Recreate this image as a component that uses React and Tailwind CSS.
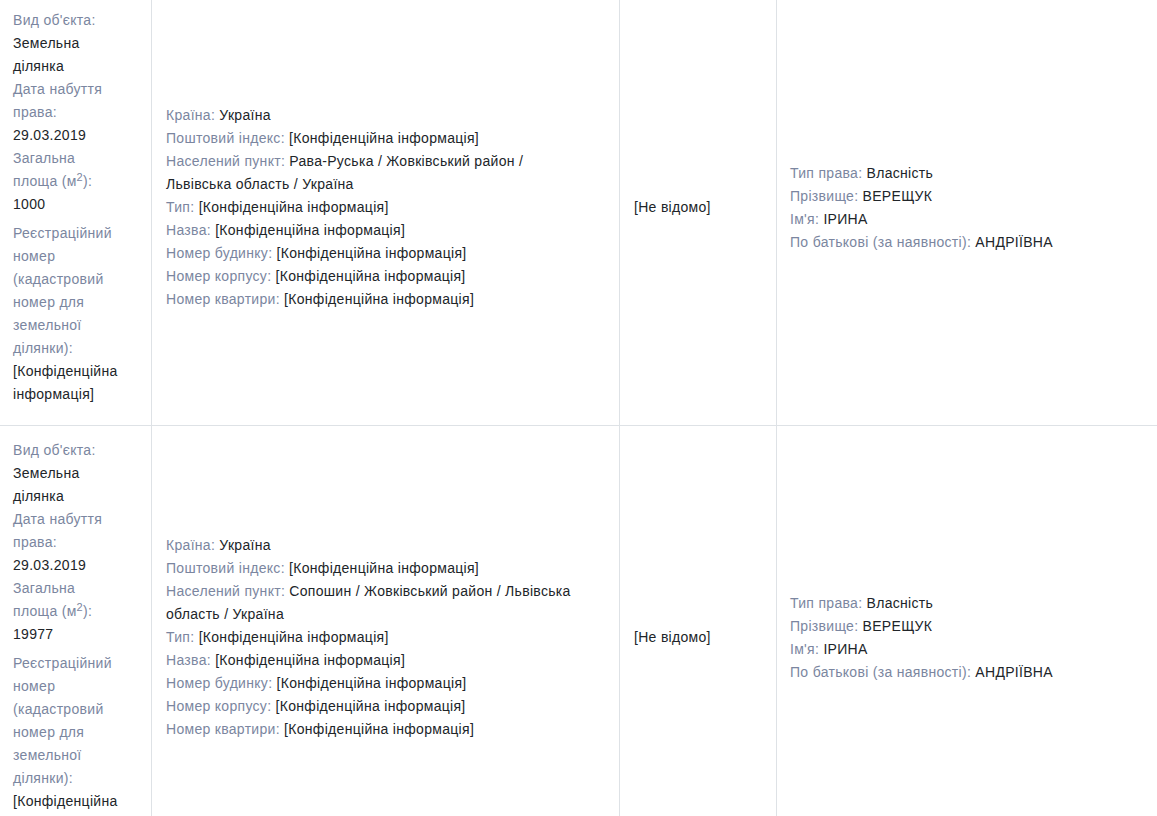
const rows = [
  {
    area: '1000',
    locality: 'Рава-Руська / Жовківський район / Львівська область / Україна',
  },
  {
    area: '19977',
    locality: 'Сопошин / Жовківський район / Львівська область / Україна',
  },
]

const CONF = '[Конфіденційна інформація]'

function Field({ label, children, className = '' }) {
  return (
    <div className={className}>
      <span className="text-[#7b86a0]">{label}</span> <span className="text-[#212529]">{children}</span>
    </div>
  )
}

function Row({ area, locality }) {
  return (
    <div className="grid grid-cols-[152px_468px_157px_1fr] border-b border-[#dee2e6]">
      {/* object */}
      <div className="border-r border-[#dee2e6] pl-[13px] pt-[13px] pb-[19px]">
        <div className="w-[107px]">
          <Field label="Вид об'єкта:">Земельна ділянка</Field>
          <Field label="Дата набуття права:">29.03.2019</Field>
          <Field label={<>Загальна площа (м<sup className="text-[11px]">2</sup>):</>}>{area}</Field>
          <Field label="Реєстраційний номер (кадастровий номер для земельної ділянки):" className="mt-[6px]">
            {CONF}
          </Field>
        </div>
      </div>

      {/* address */}
      <div className="border-r border-[#dee2e6] pl-[14px] flex items-center">
        <div className="w-[415px] pb-[6px]">
          <Field label="Країна:">Україна</Field>
          <Field label="Поштовий індекс:">{CONF}</Field>
          <Field label="Населений пункт:">{locality}</Field>
          <Field label="Тип:">{CONF}</Field>
          <Field label="Назва:">{CONF}</Field>
          <Field label="Номер будинку:">{CONF}</Field>
          <Field label="Номер корпусу:">{CONF}</Field>
          <Field label="Номер квартири:">{CONF}</Field>
        </div>
      </div>

      <div className="border-r border-[#dee2e6] pl-[14px] flex items-center">
        <div className="text-[#212529] pb-[6px]">[Не відомо]</div>
      </div>

      {/* owner */}
      <div className="pl-[13px] flex items-center">
        <div className="pb-[6px]">
          <Field label="Тип права:">Власність</Field>
          <Field label="Прізвище:">ВЕРЕЩУК</Field>
          <Field label="Ім'я:">ІРИНА</Field>
          <Field label="По батькові (за наявності):">АНДРІЇВНА</Field>
        </div>
      </div>
    </div>
  )
}

export default function App() {
  return (
    <div className="h-[816px] overflow-hidden bg-white font-['Liberation_Sans',Arial,sans-serif] text-[14px] leading-[23px] tracking-[0.3px]">
      <div className="-mt-[4px]">
        {rows.map((r, i) => (
          <Row key={i} {...r} />
        ))}
      </div>
    </div>
  )
}
